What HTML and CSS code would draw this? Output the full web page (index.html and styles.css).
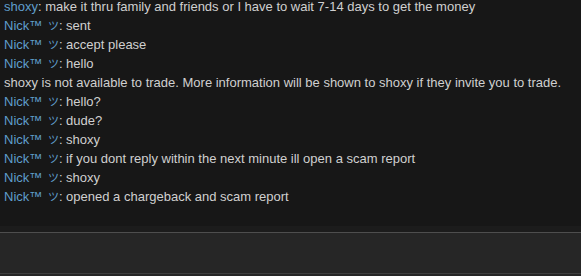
FILE: index.html
```html
<!DOCTYPE html>
<html>
<head>
<meta charset="utf-8">
<link rel="stylesheet" href="styles.css">
</head>
<body>
<div class="chat">
  <div class="log">
    <div class="msg"><span class="name">shoxy</span>: make it thru family and friends or I have to wait 7-14 days to get the money</div>
    <div class="msg"><span class="name">Nick™ <span class="jp">ツ</span></span>: sent</div>
    <div class="msg"><span class="name">Nick™ <span class="jp">ツ</span></span>: accept please</div>
    <div class="msg"><span class="name">Nick™ <span class="jp">ツ</span></span>: hello</div>
    <div class="msg">shoxy is not available to trade. More information will be shown to shoxy if they invite you to trade.</div>
    <div class="msg"><span class="name">Nick™ <span class="jp">ツ</span></span>: hello?</div>
    <div class="msg"><span class="name">Nick™ <span class="jp">ツ</span></span>: dude?</div>
    <div class="msg"><span class="name">Nick™ <span class="jp">ツ</span></span>: shoxy</div>
    <div class="msg"><span class="name">Nick™ <span class="jp">ツ</span></span>: if you dont reply within the next minute ill open a scam report</div>
    <div class="msg"><span class="name">Nick™ <span class="jp">ツ</span></span>: shoxy</div>
    <div class="msg"><span class="name">Nick™ <span class="jp">ツ</span></span>: opened a chargeback and scam report</div>
  </div>
  <div class="gap"></div>
  <div class="entry"></div>
</div>
</body>
</html>
```

FILE: styles.css
```css
html, body {
  margin: 0;
  padding: 0;
  background: #262626;
}
.chat {
  width: 581px;
  height: 276px;
  display: flex;
  flex-direction: column;
  overflow: hidden;
}
.log {
  height: 226px;
  flex: none;
  background: #171717;
  display: flex;
  flex-direction: column;
  justify-content: flex-end;
  padding: 0 4px 20px 4px;
  box-sizing: border-box;
  overflow: hidden;
  font-family: "Liberation Sans", Arial, sans-serif;
  font-size: 13px;
  line-height: 19px;
  color: #d0d0d0;
}
.msg {
  white-space: nowrap;
}
.name {
  color: #5f9ecc;
}
.jp {
  font-family: "Noto Sans CJK JP", sans-serif;
  font-size: 11px;
  margin-left: 2px;
}
.gap {
  height: 6px;
  flex: none;
  background: #1c1c1c;
}
.entry {
  height: 40px;
  flex: none;
  background: #262626;
  border-top: 1px solid #4e4e4e;
  border-bottom: 1px solid #3e3e3e;
}
```
